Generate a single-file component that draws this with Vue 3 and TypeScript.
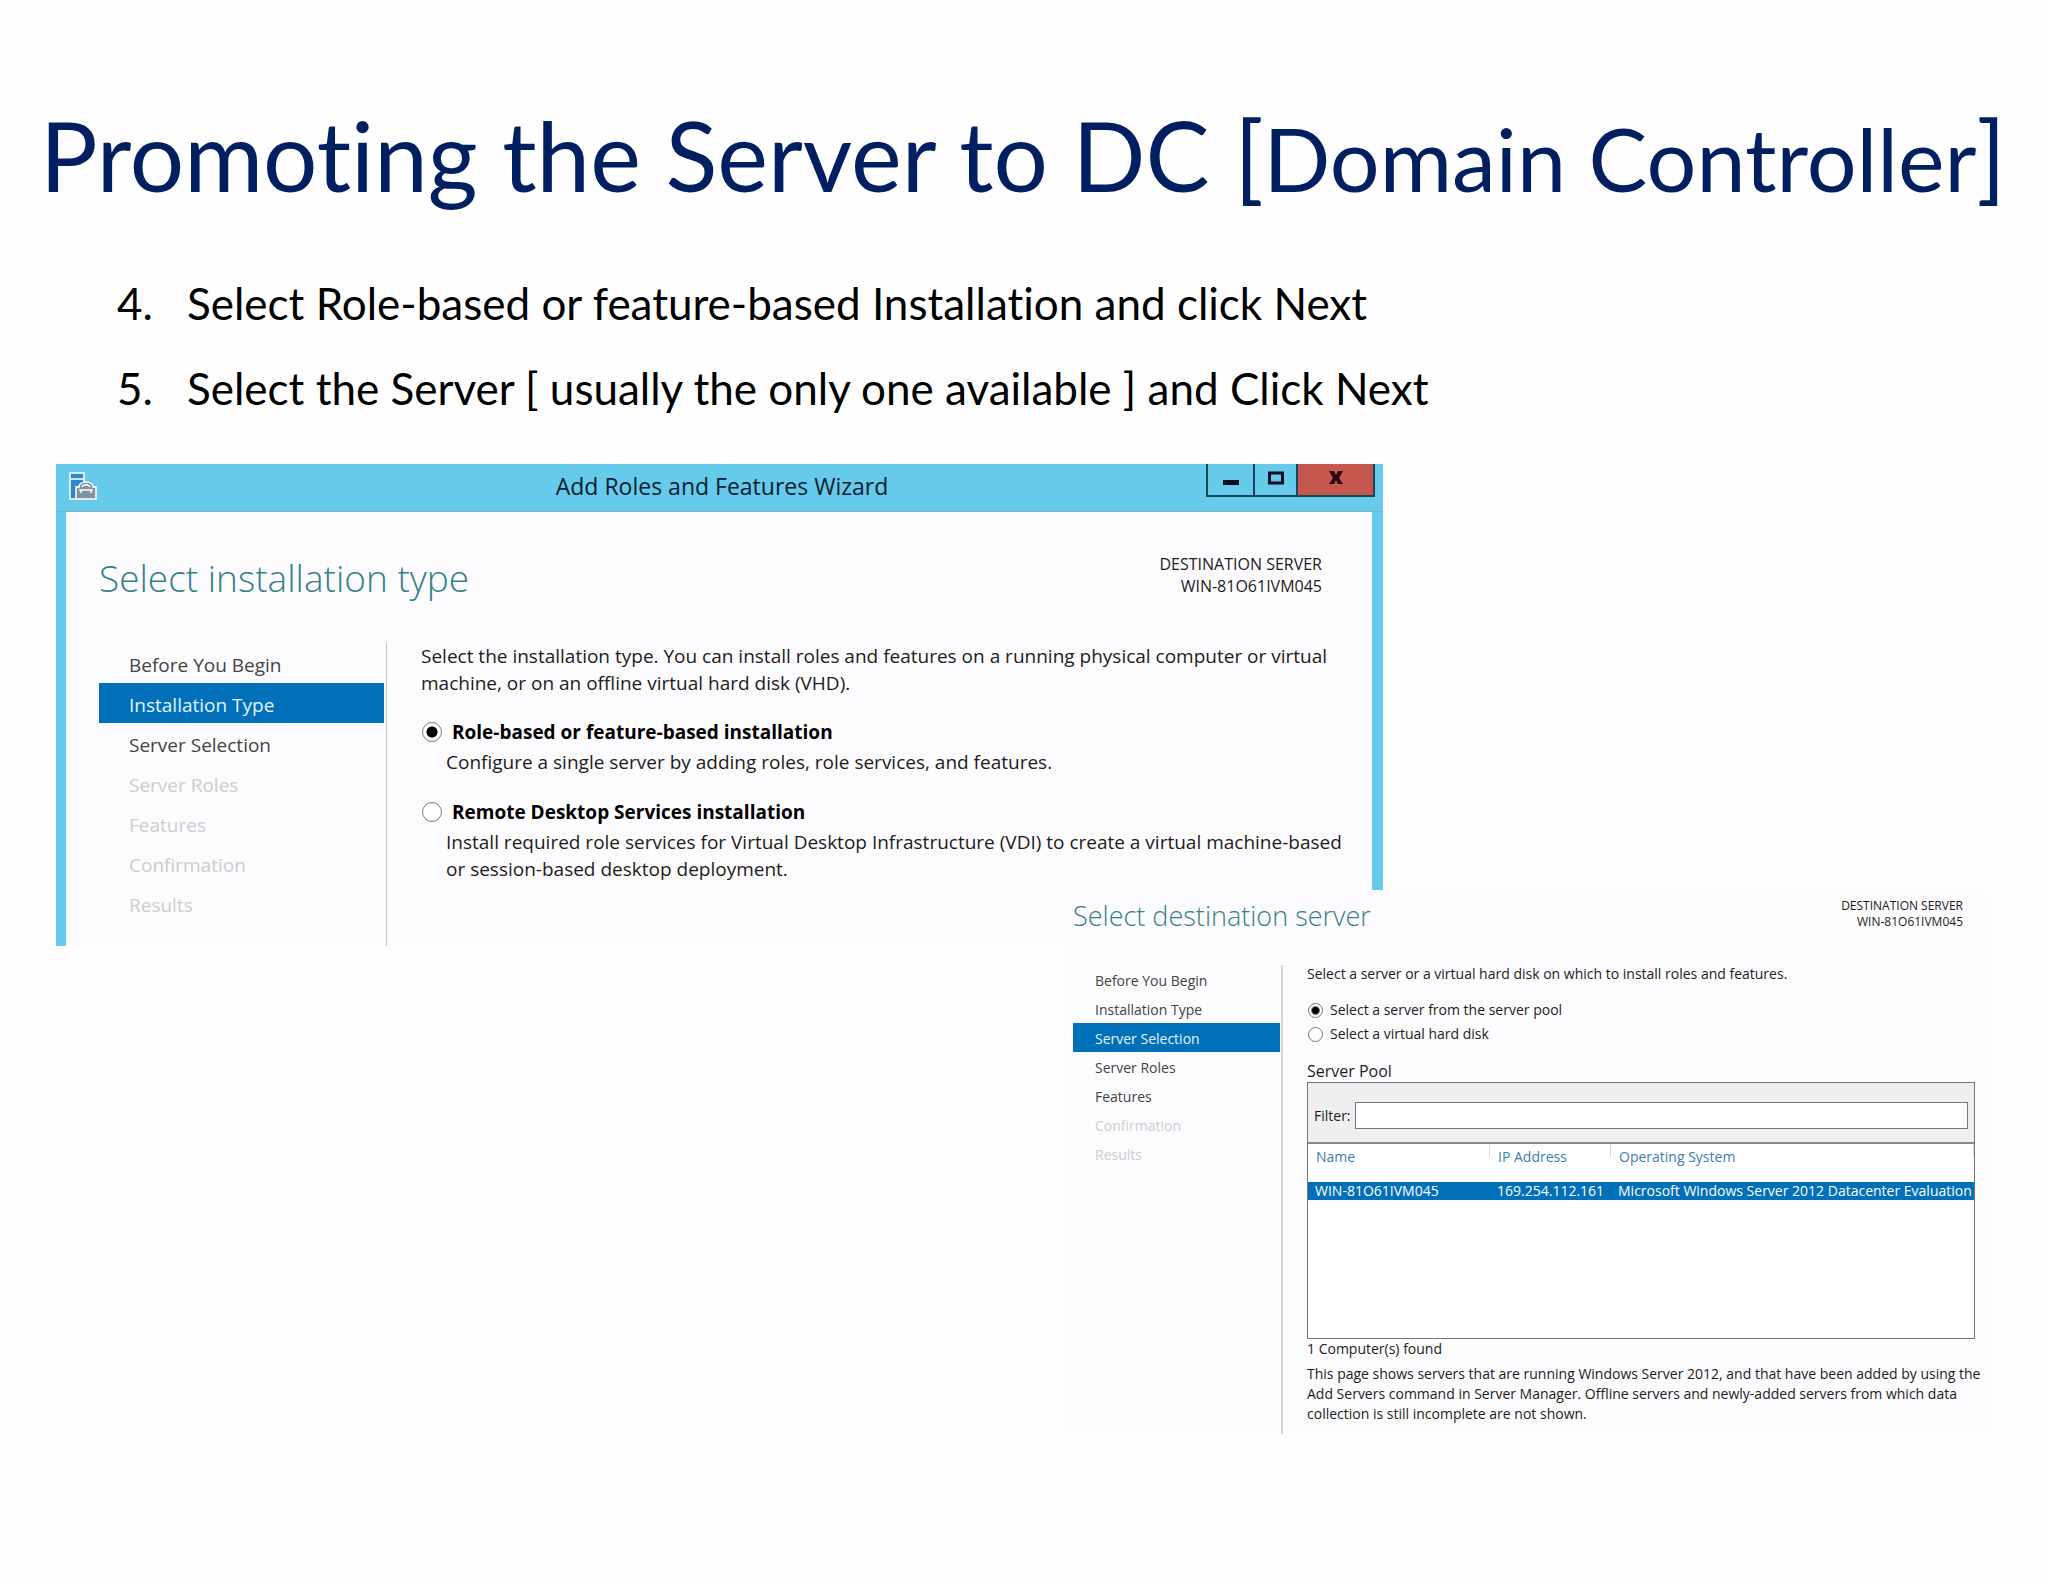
<script setup lang="ts">
import { ref } from 'vue'

type StepState = 'open' | 'current' | 'locked'

interface Step {
  label: string
  state: StepState
}

interface PoolServer {
  name: string
  ip: string
  os: string
}

const host = 'WIN-81O61IVM045'

const instructions = [
  'Select Role-based or feature-based Installation and click Next',
  'Select the Server [ usually the only one available ] and Click Next',
]

const typeSteps: Step[] = [
  { label: 'Before You Begin', state: 'open' },
  { label: 'Installation Type', state: 'current' },
  { label: 'Server Selection', state: 'open' },
  { label: 'Server Roles', state: 'locked' },
  { label: 'Features', state: 'locked' },
  { label: 'Confirmation', state: 'locked' },
  { label: 'Results', state: 'locked' },
]

const serverSteps: Step[] = [
  { label: 'Before You Begin', state: 'open' },
  { label: 'Installation Type', state: 'open' },
  { label: 'Server Selection', state: 'current' },
  { label: 'Server Roles', state: 'open' },
  { label: 'Features', state: 'open' },
  { label: 'Confirmation', state: 'locked' },
  { label: 'Results', state: 'locked' },
]

const installTypes = [
  {
    id: 'role',
    label: 'Role-based or feature-based installation',
    detail: 'Configure a single server by adding roles, role services, and features.',
  },
  {
    id: 'rds',
    label: 'Remote Desktop Services installation',
    detail:
      'Install required role services for Virtual Desktop Infrastructure (VDI) to create a virtual machine-based\nor session-based desktop deployment.',
  },
]

const sources = [
  { id: 'pool', label: 'Select a server from the server pool' },
  { id: 'vhd', label: 'Select a virtual hard disk' },
]

const servers: PoolServer[] = [
  { name: host, ip: '169.254.112.161', os: 'Microsoft Windows Server 2012 Datacenter Evaluation' },
]

const installType = ref('role')
const source = ref('pool')
const filter = ref('')
</script>

<template>
  <main class="slide">
    <h1 class="headline">Promoting the Server to DC [<span class="expansion">Domain Controller</span>]</h1>

    <ol class="instructions" start="4">
      <li v-for="(line, i) in instructions" :key="line">
        <span class="number">{{ i + 4 }}.</span>{{ line }}
      </li>
    </ol>

    <div class="windows">
      <section class="wizard">
        <header class="titlebar">
          <svg class="app-icon" viewBox="0 0 28 28" width="28" height="28" aria-hidden="true">
            <path d="M1 1h14v26H1z" fill="#2f86c8" />
            <path d="M15 10V1H1v26h6M1 7h14" fill="none" stroke="#fff" stroke-width="1.5" />
            <path d="M7 27V15h3c0-3 3-5 7-5s7 2 7 5h3v12z" fill="#7d93a3" stroke="#fff" stroke-width="1.5" />
            <path d="M13 15c1-3 7-3 8 0M7 15h3M24 15h3M10 18h14M12 18v3M22 18v3" fill="none" stroke="#fff" stroke-width="1.5" />
          </svg>
          <span class="caption">Add Roles and Features Wizard</span>
          <div class="controls">
            <button type="button" class="control minimise" aria-label="Minimize">
              <svg viewBox="0 0 18 14" width="18" height="14"><path d="M1 9h16v5H1z" fill="#06101f" /></svg>
            </button>
            <button type="button" class="control maximise" aria-label="Maximize">
              <svg viewBox="0 0 18 14" width="18" height="14">
                <path d="M2.5 2h13v10h-13z" fill="none" stroke="#06101f" stroke-width="3" />
              </svg>
            </button>
            <button type="button" class="control close" aria-label="Close">
              <svg viewBox="0 0 16 14" width="16" height="14">
                <path d="M1 0h5l2 4 2-4h5l-4 7 4 6h-5l-2-4-2 4H1l4-6z" fill="#2a0a0e" />
              </svg>
            </button>
          </div>
        </header>

        <div class="page">
          <div class="page-head">
            <h2>Select installation type</h2>
            <p class="destination">DESTINATION SERVER<br />{{ host }}</p>
          </div>
          <div class="columns">
            <nav class="steps" aria-label="Installation type steps">
              <a v-for="s in typeSteps" :key="s.label" href="#" :class="s.state">{{ s.label }}</a>
            </nav>
            <div class="content">
              <p class="lead">Select the installation type. You can install roles and features on a running physical computer or virtual<br />machine, or on an offline virtual hard disk (VHD).</p>
              <div v-for="t in installTypes" :key="t.id" class="choice">
                <label>
                  <input v-model="installType" type="radio" name="install-type" :value="t.id" />
                  {{ t.label }}
                </label>
                <p>{{ t.detail }}</p>
              </div>
            </div>
          </div>
        </div>
      </section>

      <section class="picker">
        <div class="page-head">
          <h2>Select destination server</h2>
          <p class="destination">DESTINATION SERVER<br />{{ host }}</p>
        </div>
        <div class="columns">
          <nav class="steps" aria-label="Server selection steps">
            <a v-for="s in serverSteps" :key="s.label" href="#" :class="s.state">{{ s.label }}</a>
          </nav>
          <div class="content">
            <p class="lead">Select a server or a virtual hard disk on which to install roles and features.</p>
            <div class="sources">
              <label v-for="s in sources" :key="s.id">
                <input v-model="source" type="radio" name="source" :value="s.id" />
                {{ s.label }}
              </label>
            </div>
            <h3>Server Pool</h3>
            <div class="pool">
              <div class="filter">
                <label for="pool-filter">Filter:</label>
                <input id="pool-filter" v-model="filter" type="text" />
              </div>
              <table>
                <colgroup>
                  <col class="col-name" />
                  <col class="col-ip" />
                  <col />
                </colgroup>
                <thead>
                  <tr>
                    <th>Name</th>
                    <th>IP Address</th>
                    <th>Operating System</th>
                  </tr>
                </thead>
                <tbody>
                  <tr v-for="s in servers" :key="s.name">
                    <td>{{ s.name }}</td>
                    <td>{{ s.ip }}</td>
                    <td>{{ s.os }}</td>
                  </tr>
                </tbody>
              </table>
            </div>
            <p class="count">{{ servers.length }} Computer(s) found</p>
            <p class="note">This page shows servers that are running Windows Server 2012, and that have been added by using the<br />Add Servers command in Server Manager. Offline servers and newly-added servers from which data<br />collection is still incomplete are not shown.</p>
          </div>
        </div>
      </section>
    </div>
  </main>
</template>

<style>
body {
  background: #fefefe;
}
</style>

<style scoped>
.slide {
  padding: 100px 0 148px;
  font-family: 'Open Sans', 'Noto Sans', sans-serif;
  color: #1c1c1c;
}

h1, h2, h3, p, ol {
  margin: 0;
  padding: 0;
  font-weight: 400;
}

.headline {
  padding-left: 40px;
  font: 400 96px/110px Lato, sans-serif;
  font-variant-ligatures: none;
  color: #001f60;
  white-space: nowrap;
}

.expansion {
  font-size: 88px;
  line-height: 1;
}

.instructions {
  margin: 51px 0 33px 117px;
  list-style: none;
  font: 400 44px/85px Lato, sans-serif;
  font-variant-ligatures: none;
  color: #000;
  white-space: nowrap;
}

.instructions li {
  display: flex;
}

.number {
  width: 70px;
}

/* The second window overlaps the lower right corner of the first. */
.windows {
  display: grid;
  grid-template-columns: 1009fr 318fr 607fr;
  grid-template-rows: 426px 56px auto;
  margin: 0 58px 0 56px;
  white-space: nowrap;
}

.wizard {
  grid-area: 1 / 1 / 3 / 3;
  min-width: 0;
  display: flex;
  flex-direction: column;
  background: #66caea;
}

.titlebar {
  display: grid;
  grid-template-columns: 1fr auto 1fr;
  height: 47px;
  padding: 0 8px 0 13px;
  border-bottom: 1px solid #7eaec0;
}

.app-icon {
  margin-top: 8px;
}

.caption {
  font-size: 23px;
  line-height: 44px;
  color: #0b2030;
}

.controls {
  display: flex;
  justify-self: end;
  height: 33px;
}

.control {
  display: flex;
  align-items: center;
  justify-content: center;
  padding: 0 0 4px;
  border: 0 solid #17455c;
  border-width: 0 0 2px 2px;
  background: transparent;
}

.minimise {
  width: 47px;
}

.maximise {
  width: 43px;
}

.close {
  width: 79px;
  border-right-width: 2px;
  background: #c5574f;
}

.page {
  flex: 1;
  display: flex;
  flex-direction: column;
  margin: 0 11px 0 10px;
  padding: 41px 0 0 33px;
  background: #fcfbfd;
}

.page-head {
  display: flex;
  justify-content: space-between;
  align-items: flex-start;
}

h2 {
  font-weight: 300;
  color: #35808c;
}

.destination {
  text-align: right;
}

.columns {
  display: flex;
  flex: 1;
}

.steps {
  display: flex;
  flex-direction: column;
  flex: none;
}

.steps a {
  color: #444;
  text-decoration: none;
}

.steps .current {
  background: #0070b9;
  color: #e4f4ff;
}

.steps .locked {
  color: #cdcdd0;
}

.content {
  flex: 1;
  min-width: 0;
}

input[type='radio'] {
  appearance: none;
  flex: none;
  margin: 0 0 0 1px;
  border: 1px solid #777;
  border-radius: 50%;
  background: #fff;
}

.wizard h2 {
  font-size: 37px;
  line-height: 50px;
}

.wizard .destination {
  margin-right: 50px;
  font-size: 16px;
  line-height: 22px;
}

.wizard .columns {
  margin-top: 40px;
}

.wizard .steps {
  width: 285px;
  margin-right: 2px;
}

.wizard .steps a {
  padding: 4px 0 0 30px;
  font-size: 19px;
  line-height: 36px;
}

.wizard .content {
  padding-left: 34px;
  border-left: 1px solid #c4c4c8;
  font-size: 19px;
  line-height: 27px;
}

.wizard .lead {
  margin-bottom: 22px;
}

.choice {
  margin-bottom: 23px;
}

.choice label {
  display: flex;
  align-items: center;
  gap: 10px;
  line-height: 26px;
  font-weight: 700;
  color: #000;
}

.choice input {
  width: 20px;
  height: 20px;
}

.choice input:checked {
  background: radial-gradient(circle, #000 5px, #fff 6px);
}

.choice p {
  margin: 4px 0 0 25px;
  white-space: pre;
}

.picker {
  grid-area: 2 / 2 / 4 / 4;
  min-width: 0;
  padding: 5px 15px 0 8px;
  background: #fcfbfd;
  font-size: 14px;
}

.picker h2 {
  font-size: 27px;
  line-height: 42px;
}

.picker .destination {
  margin: 3px 12px 0 0;
  font-size: 12px;
  line-height: 16px;
}

.picker .columns {
  margin-top: 28px;
}

.picker .steps {
  width: 207px;
  margin-right: 1px;
}

.picker .steps a {
  padding: 2px 0 0 22px;
  line-height: 27px;
}

.picker .content {
  padding: 0 0 10px 24px;
  border-left: 2px solid #d6d6da;
}

.picker .lead {
  line-height: 18px;
}

.sources {
  margin: 15px 0 14px;
}

.sources label {
  display: flex;
  align-items: center;
  gap: 7px;
  line-height: 24px;
}

.sources input {
  width: 15px;
  height: 15px;
}

.sources input:checked {
  background: radial-gradient(circle, #000 3px, #fff 5px);
}

h3 {
  font-size: 16px;
  line-height: 22px;
}

.pool {
  box-sizing: border-box;
  min-height: 257px;
  border: 1px solid #77757a;
  background: #fff;
}

.filter {
  display: flex;
  align-items: center;
  gap: 4px;
  padding: 19px 6px 13px;
  border-bottom: 2px solid #8a888c;
  background: #f0eef1;
}

.filter input {
  box-sizing: border-box;
  flex: 1;
  min-width: 0;
  height: 27px;
  border: 1px solid #77757a;
  background: #fff;
  font: inherit;
}

table {
  width: 100%;
  table-layout: fixed;
  border-collapse: collapse;
}

.col-name {
  width: 182px;
}

.col-ip {
  width: 121px;
}

th {
  padding: 0 0 12px 8px;
  font-weight: 400;
  line-height: 26px;
  text-align: left;
  color: #3d7dad;
  background: linear-gradient(#dcdcdf, #dcdcdf) right top / 1px 13px no-repeat;
}

td {
  padding: 0 0 0 7px;
  line-height: 18px;
  color: #fff;
  background: #0070b9;
}

.count,
.note {
  line-height: 20px;
}

.note {
  margin-top: 5px;
}
</style>
